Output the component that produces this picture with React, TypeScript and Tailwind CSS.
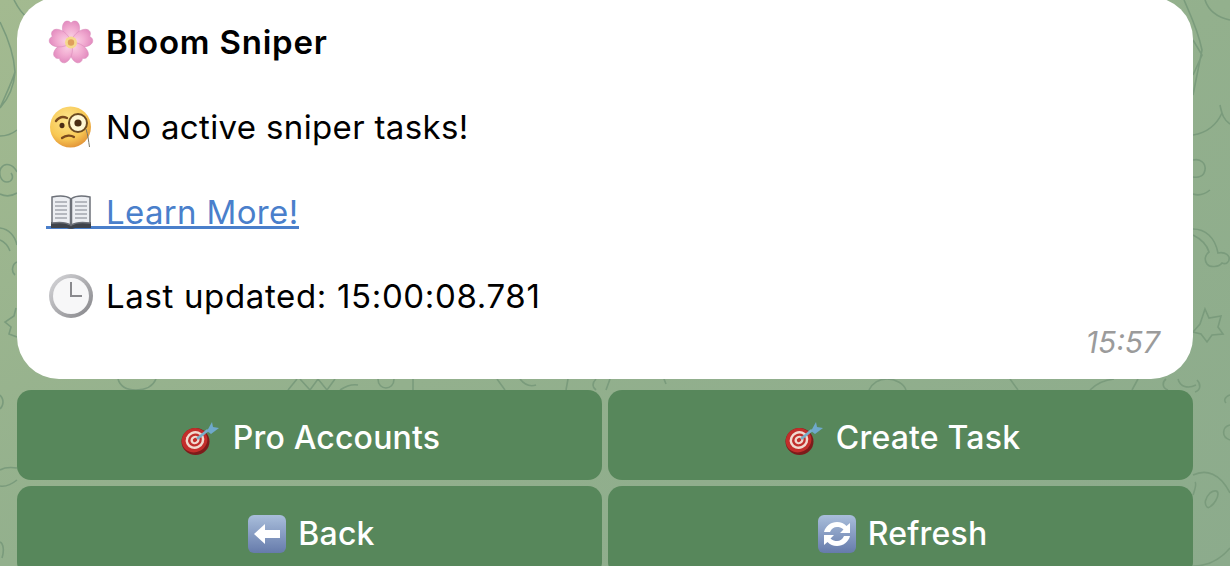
import type { ReactNode } from "react";

const font = "font-['Inter','Liberation_Sans',sans-serif]";

function Flower() {
  const petals = [0, 72, 144, 216, 288];
  return (
    <svg viewBox="0 0 46 46" className="w-[46px] h-[46px] shrink-0">
      <defs>
        <radialGradient id="petal" cx="50%" cy="75%" r="75%">
          <stop offset="0%" stopColor="#f9cfe3" />
          <stop offset="55%" stopColor="#f2add2" />
          <stop offset="100%" stopColor="#e48fc1" />
        </radialGradient>
      </defs>
      {petals.map((a) => (
        <g key={a} transform={`rotate(${a} 23 23.500)`}>
          <path d="M23 24C14.500 18 12.500 8 16 3.500c2-2 5-2 7 .5 2-2.500 5-2.500 7-.5 3.500 4.500 1.500 14.500-7 20.500z" fill="url(#petal)" stroke="#d988b8" strokeWidth="0.500" />
        </g>
      ))}
      <circle cx="23" cy="23.500" r="6" fill="#f5d98c" />
      <circle cx="23" cy="23.500" r="3.200" fill="#df9f5c" />
    </svg>
  );
}

function MonocleFace() {
  return (
    <svg viewBox="0 0 46 46" className="w-[46px] h-[46px] shrink-0">
      <defs>
        <radialGradient id="face" cx="42%" cy="32%" r="72%">
          <stop offset="0%" stopColor="#fde68e" />
          <stop offset="65%" stopColor="#f8c854" />
          <stop offset="100%" stopColor="#e08f35" />
        </radialGradient>
      </defs>
      <circle cx="22.500" cy="23" r="20.500" fill="url(#face)" />
      <path d="M8 17c3-4 7-5 11-3" fill="none" stroke="#7a4a1e" strokeWidth="2.400" strokeLinecap="round" />
      <ellipse cx="14" cy="21.500" rx="2.500" ry="2.800" fill="#4a2d14" />
      <circle cx="30" cy="19" r="9" fill="#fff6d2" stroke="#6b4a22" strokeWidth="2" />
      <circle cx="30" cy="19" r="3.600" fill="#4a2d14" />
      <path d="M14 34c4-3 9-3 12-1" fill="none" stroke="#7a4a1e" strokeWidth="2.200" strokeLinecap="round" />
      <path d="M38 25c2 6 2.500 12 3.500 18" fill="none" stroke="#77776a" strokeWidth="1" />
    </svg>
  );
}

function Book() {
  return (
    <svg viewBox="0 0 46 34" className="w-[46px] h-[34px] shrink-0">
      <path d="M3 27h40v6H27c-1 1-7 1-8 0H3z" fill="#3f434b" />
      <path d="M4 2c7-1.500 14-1.500 18.500 1.500V30C18 27 11 27 4 28z" fill="#eceef2" stroke="#6d7179" strokeWidth="1.500" />
      <path d="M42 2c-7-1.500-14-1.500-18.500 1.500V30C28 27 35 27 42 28z" fill="#eceef2" stroke="#6d7179" strokeWidth="1.500" />
      <path d="M7 7h12M7 11h12M7 15h12M7 19h12M7 23h12M27 7h12M27 11h12M27 15h12M27 19h12M27 23h12" stroke="#a3a7af" strokeWidth="1.600" />
    </svg>
  );
}

function Clock() {
  return (
    <svg viewBox="0 0 46 46" className="w-[46px] h-[46px] shrink-0">
      <defs>
        <linearGradient id="rim" x1="0" y1="0" x2="1" y2="1">
          <stop offset="0%" stopColor="#d9d9dc" />
          <stop offset="100%" stopColor="#838387" />
        </linearGradient>
      </defs>
      <circle cx="23" cy="23" r="22" fill="url(#rim)" />
      <circle cx="23" cy="23" r="18" fill="#f7f7f8" />
      <path d="M23 9v14h11" fill="none" stroke="#8a8a8e" strokeWidth="2" />
    </svg>
  );
}

function Dart() {
  return (
    <svg viewBox="0 0 40 36" className="w-[40px] h-[36px] shrink-0">
      <ellipse cx="15.500" cy="21.500" rx="14" ry="13.500" fill="#7d1b1b" />
      <g transform="rotate(-25 15 20)">
        <ellipse cx="14.500" cy="20" rx="13" ry="12" fill="#c22e2b" />
        <ellipse cx="15" cy="20" rx="9.500" ry="8.800" fill="#f1d9cf" />
        <ellipse cx="15" cy="20" rx="7" ry="6.400" fill="#c22e2b" />
        <ellipse cx="15" cy="20" rx="4.600" ry="4.200" fill="#f1d9cf" />
        <ellipse cx="15" cy="20" rx="2.200" ry="2" fill="#c22e2b" />
      </g>
      <path d="M17 19 28 10" stroke="#79aec9" strokeWidth="2.800" />
      <path d="M27 11l5-9 1 5 6 1-8 6z" fill="#6fa9cc" />
    </svg>
  );
}

function BlueKey({ children }: { children: ReactNode }) {
  return (
    <svg viewBox="0 0 38 38" className="w-[38px] h-[38px] shrink-0">
      <defs>
        <linearGradient id="key" x1="0" y1="0" x2="0" y2="1">
          <stop offset="0%" stopColor="#a9bedb" />
          <stop offset="100%" stopColor="#667bab" />
        </linearGradient>
      </defs>
      <rect x="0" y="0" width="38" height="38" rx="6" fill="url(#key)" />
      {children}
    </svg>
  );
}

function BackKey() {
  return (
    <BlueKey>
      <path d="M6 19 17 9v6h15v8H17v6z" fill="#fff" />
    </BlueKey>
  );
}

function RefreshKey() {
  return (
    <BlueKey>
      <path d="M6 17c1.500-6 7-10 13-10 4 0 7 1.500 9.500 4L32 8v10h-10l3.500-3.500C23.500 12.500 21 12 19 12c-3 0-5.500 1.800-7 5z" fill="#fff" />
      <path d="M32 21c-1.500 6-7 10-13 10-4 0-7-1.500-9.500-4L6 30V20h10l-3.500 3.500c2 2 4.500 2.500 6.500 2.500 3 0 5.500-1.800 7-5z" fill="#fff" />
    </BlueKey>
  );
}

// wallpaper pattern, only the bits that show around the bubble and the keys
function Doodles() {
  return (
    <svg viewBox="0 0 1230 566" className="absolute inset-0 w-full h-full" fill="none" stroke="#7a9b7c" strokeWidth="1.600">
      <path d="M0 22c8 16 14 32 15 50-1 14-6 26-15 36M14 0C18 8 22 14 28 18M0 108c6-14 12-26 15-36M0 136c6 0 12-2 17-6" />
      <path d="M17 172c-4-8-12-10-16-4-3 6 0 14 6 14 5 0 7-5 4-9M0 194c6 3 12 2 17-1" />
      <path d="M0 228c9 1 15 8 17 17M17 262c-5 2-6 10-2 13M0 240c5 2 8 6 10 11" />
      <path d="M16 308l-2 8-9 6 6 5-2 7 8 3" />
      <path d="M0 542c4 2 4 10 2 16M0 395c4 4 4 10 0 14" />
      <path d="M1205 0c3 9 11 17 25 20M1193 135c13-2 23-9 29-22M1220 105c2 10 4 15 10 19M1184 0c6 14 14 30 18 50l-9 45M1193 40l9 15-9 20" />
      <path d="M1193 160c8-2 13 4 12 10-1 6-6 8-12 7M1193 194c6 2 12 0 17-4" />
      <path d="M1193 229c12 0 22 8 25 24 4-1 9 0 11 4 1 5-3 8-7 6-3 4-12 5-15 1-3-4-2-9 2-12-2-7-8-13-16-17" />
      <path d="M1205 309l4 9 12-2-3 11 5 7-11 1-5 7-6-8-8-2 7-8z" />
      <path d="M118 379c2 7 8 11 18 11s17-4 20-11M288 390l9-11M300 379l10 11 8-11 9 11 8-11M340 390c6-4 12-6 18-5M378 379c0 6 4 9 8 9s8-3 8-9M413 379v11" />
      <path d="M505 390l-8-11M520 379c4 5 10 8 16 6M568 379l-2 11M596 379c-4 4-4 8 0 11M610 379l-4 11" />
      <path d="M664 379l2 5M906 390c-2-6-10-11-19-11s-15 5-18 11M1018 390l-8-11M1090 390c6-6 14-10 24-11M1138 379l-6 11M1178 379c2 8 10 10 18 6" />
      <path d="M1168 390c-6-2-6-8-2-11M1197 380c4 4 4 10-2 12" />
      <path d="M1230 395c-6 2-6 6-4 8M1230 425c-8 2-9 12 0 15" />
      <path d="M1193 475c13-6 27-2 37 18M1193 495c2-6 4-11 2-13M1207 507c-3-3-2-9 3-14 4-3 8-3 8 1 0 4-4 10-7 12-2 2-3 2-4 1zM1193 566c14 0 27-6 37-18" />
      <path d="M0 470c5-3 10-3 17-2M0 486c6 1 12-2 17-6" />
    </svg>
  );
}

function Line({ icon, children }: { icon: ReactNode; children: ReactNode }) {
  return (
    <div className="h-[42px] flex items-center gap-[12px]">
      <span className="w-[46px] flex justify-center">{icon}</span>
      {children}
    </div>
  );
}

function KeyButton({ icon, label, className }: { icon: ReactNode; label: string; className: string }) {
  return (
    <button className={`h-[90px] pt-[6px] rounded-[14px] bg-[#57875b] flex items-center justify-center text-white text-[32px] font-medium tracking-[0.2px] leading-none ${className}`}>
      {icon}
      <span>{label}</span>
    </button>
  );
}

export default function App() {
  return (
    <div className={`relative w-[1230px] h-[566px] overflow-hidden bg-gradient-to-br from-[#a3ba90] via-[#93b08d] to-[#8cab8c] ${font}`}>
      <Doodles />
      <div className="relative pl-[17px] pr-[37px]">
        <div className="-mt-[3px] h-[382px] rounded-[42px] bg-white pl-[31px] pr-[33px] pt-[24px] text-[33px] tracking-[0.35px] text-black leading-none flex flex-col gap-[43px]">
          <Line icon={<Flower />}>
            <span className="font-semibold tracking-[0.8px]">Bloom Sniper</span>
          </Line>
          <Line icon={<MonocleFace />}>
            <span>No active sniper tasks!</span>
          </Line>
          <div className="h-[42px]">
            <a className="-ml-[2px] w-[253px] h-[38px] pt-[7px] border-b-[3px] border-[#4a7fcb] flex items-center gap-[12px] text-[#4a7fcb]">
              <span className="w-[46px] ml-[2px] flex justify-center"><Book /></span>
              <span>Learn More!</span>
            </a>
          </div>
          <div className="-mt-[1px]">
            <Line icon={<Clock />}>
              <span className="tracking-[0.65px]">Last updated: 15:00:08.781</span>
            </Line>
          </div>
          <div className="-mt-[33px] text-right text-[30px] tracking-normal italic text-[#9b9b9b]">15:57</div>
        </div>
        <div className="mt-[11px] grid grid-cols-2 gap-x-[6px] gap-y-[6px]">
          <KeyButton icon={<Dart />} label="Pro Accounts" className="pl-[1px] gap-[13px]" />
          <KeyButton icon={<Dart />} label="Create Task" className="pl-[3px] gap-[12px]" />
          <KeyButton icon={<BackKey />} label="Back" className="pl-[4px] gap-[12px]" />
          <KeyButton icon={<RefreshKey />} label="Refresh" className="pl-[4px] gap-[12px]" />
        </div>
      </div>
    </div>
  );
}
